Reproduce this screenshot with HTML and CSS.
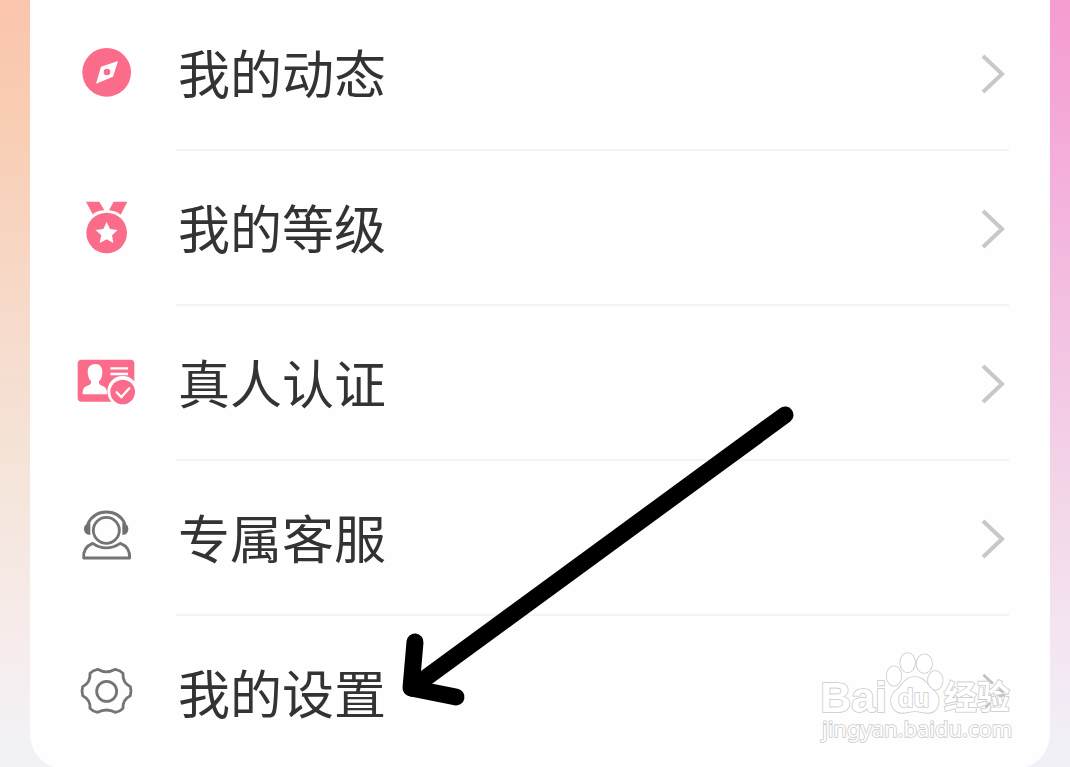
FILE: index.html
```html
<!DOCTYPE html>
<html lang="zh-CN">
<head>
<meta charset="utf-8">
<title>我的</title>
<link rel="stylesheet" href="styles.css">
</head>
<body>
<main class="page">
  <ul class="card">
    <li class="row">
      <svg class="icon" viewBox="0 0 225 225"><circle class="pink" cx="110" cy="112" r="73"/><path class="white" d="M144 78L129 125L78 146L93 95Z"/><circle class="pink" cx="111" cy="111" r="10"/></svg>
      <div class="body"><span class="label">我的动态</span><svg class="chevron" viewBox="0 0 26 40"><path d="M3 2L22 20L3 38"/></svg></div>
    </li>
    <li class="row">
      <svg class="icon" viewBox="0 0 225 225"><path class="pink" d="M48 35H88L103 61Q83 61 68 73ZM131 35H172L152 74Q137 62 117 61Z"/><circle class="pink" cx="110" cy="129" r="61"/><path class="white" d="M110 96L120 117L143 120L126 136L130 159L110 148L89 159L94 136L77 120L100 117Z"/></svg>
      <div class="body"><span class="label">我的等级</span><svg class="chevron" viewBox="0 0 26 40"><path d="M3 2L22 20L3 38"/></svg></div>
    </li>
    <li class="row">
      <svg class="icon" viewBox="0 0 225 225"><rect class="pink" x="23" y="44" width="170" height="126" rx="12"/><path class="white" d="M76 57C60 57 53 68 53 81C53 93 57 102 63 109C64 118 60 120 51 123C41 126 38 134 38 148H111C111 134 108 127 98 123C89 120 86 117 87 109C95 102 97 93 97 81C97 67 90 57 76 57Z"/><path class="line-white" d="M121 70H174M121 87H174"/><circle class="white" cx="158" cy="139" r="46"/><circle class="pink" cx="158" cy="141" r="37"/><path class="check" d="M140 142L154 156L178 130"/></svg>
      <div class="body"><span class="label">真人认证</span><svg class="chevron" viewBox="0 0 26 40"><path d="M3 2L22 20L3 38"/></svg></div>
    </li>
    <li class="row">
      <svg class="icon" viewBox="0 6 225 225"><g class="outline"><circle cx="109" cy="97" r="39"/><path d="M53 78C66 52 86 42 109 42C133 42 154 54 165 78"/><path d="M68 136C53 142 39 154 41 180H179C180 156 167 142 151 136C124 154 93 154 68 136Z"/></g><path class="gray" d="M61 75C48 75 42 84 42 93S49 111 61 111ZM157 75C169 75 175 84 175 93S169 111 157 111Z"/></svg>
      <div class="body"><span class="label">专属客服</span><svg class="chevron" viewBox="0 0 26 40"><path d="M3 2L22 20L3 38"/></svg></div>
    </li>
    <li class="row">
      <svg class="icon" viewBox="0 0 225 225"><g class="outline"><circle cx="110" cy="109" r="30"/><path d="M83 43Q109 58 136 43Q151 46 159 55Q157 83 181 95Q185 109 181 122Q157 134 159 160Q151 169 136 172Q109 158 83 172Q68 169 60 160Q62 134 38 122Q34 109 38 95Q62 83 60 55Q68 46 83 43Z"/></g></svg>
      <div class="body last"><span class="label">我的设置</span></div>
    </li>
  </ul>
  <svg class="arrow" viewBox="0 0 1070 767"><path d="M785 415L412 688"/><path d="M415 642L411 688L456 697"/></svg>
  <svg class="watermark" viewBox="0 0 780 381">
    <g class="mark">
      <text class="brand" x="31" y="216" textLength="200" lengthAdjust="spacingAndGlyphs">Bai</text>
      <ellipse cx="252" cy="108" rx="22" ry="29"/><ellipse cx="293" cy="68" rx="22" ry="29"/><ellipse cx="343" cy="71" rx="23" ry="28"/><ellipse cx="376" cy="121" rx="22" ry="28"/>
      <path d="M313 111C286 111 280 134 259 151C241 166 239 187 250 204C261 221 282 220 296 216C309 213 322 213 334 216C350 220 371 220 380 204C390 187 388 166 370 151C349 134 343 111 313 111Z"/>
      <text class="du" x="264" y="202" textLength="94" lengthAdjust="spacingAndGlyphs">du</text>
      <text class="cn" x="401" y="207" textLength="198" lengthAdjust="spacingAndGlyphs">经验</text>
      <text class="url" x="36" y="292" textLength="571" lengthAdjust="spacingAndGlyphs">jingyan.baidu.com</text>
    </g>
    <path class="trace" d="M520 104L549 131M566 147L581 158M567 169L584 164M527 203L540 188"/>
  </svg>
</main>
</body>
</html>
```
FILE: styles.css
```css
body {
  margin: 0;
}

.page {
  position: relative;
  box-sizing: border-box;
  width: 1070px;
  height: 767px;
  overflow: hidden;
  padding: 0 20px 0 30px;
  background:
    linear-gradient(#fbc4ae 0, #f9ceb5 130px, #f6dccd 340px, #f5e6dc 500px, #f7ecec 640px, #f2f2f6 750px) left / 50% 100% no-repeat,
    linear-gradient(#f49bd0 0, #f4aad7 130px, #f3c3e3 340px, #f3d6e8 500px, #f4e5f2 640px, #f1f0f7 750px) right / 50% 100% no-repeat;
}

.card {
  box-sizing: border-box;
  height: 773px;
  margin: -4px 0 0;
  padding: 0 41px 0 40px;
  list-style: none;
  background: #fefefe;
  border-radius: 0 0 35px 35px;
}

.row {
  display: flex;
  height: 155px;
}

.icon {
  flex: none;
  width: 75px;
  height: 75px;
  margin: 39px 31px 0 0;
}

.body {
  box-sizing: border-box;
  flex: 1;
  display: flex;
  align-items: center;
  justify-content: space-between;
  padding: 1px 3px 0 2px;
  border-bottom: 2px solid #f3f3f3;
}

.last {
  border-color: transparent;
}

.label {
  padding-bottom: 2px;
  font: 400 52px/74px "Noto Sans CJK SC", sans-serif;
  color: #333;
  white-space: nowrap;
}

.chevron {
  width: 26px;
  height: 40px;
  padding-top: 1px;
  fill: none;
  stroke: #c8c8c8;
  stroke-width: 4;
}

.pink { fill: #fb6c8a; }
.white { fill: #fff; }
.gray { fill: #707070; }

.line-white {
  stroke: #fff;
  stroke-width: 7;
}

.check {
  fill: none;
  stroke: #fff;
  stroke-width: 7;
  stroke-linecap: round;
}

.outline {
  fill: none;
  stroke: #747474;
  stroke-width: 8.5;
  stroke-linejoin: round;
}

.arrow {
  position: absolute;
  inset: 0;
  width: 1070px;
  height: 767px;
  fill: none;
  stroke: #000;
  stroke-width: 17;
  stroke-linecap: round;
  stroke-linejoin: round;
}

.watermark {
  position: absolute;
  left: 810px;
  top: 640px;
  width: 260px;
  height: 127px;
}

.mark {
  fill: #fff;
  stroke: #cbcbcb;
  stroke-width: 5;
  paint-order: stroke;
}

.brand { font: bold 130px "Liberation Sans", sans-serif; }
.du { font: bold 78px "Liberation Sans", sans-serif; }
.cn { font: bold 100px "Noto Sans CJK SC", sans-serif; }
.url { font: 66px "Noto Sans", sans-serif; }

.trace {
  fill: none;
  stroke: #c2c2c2;
  stroke-width: 8;
}
```
